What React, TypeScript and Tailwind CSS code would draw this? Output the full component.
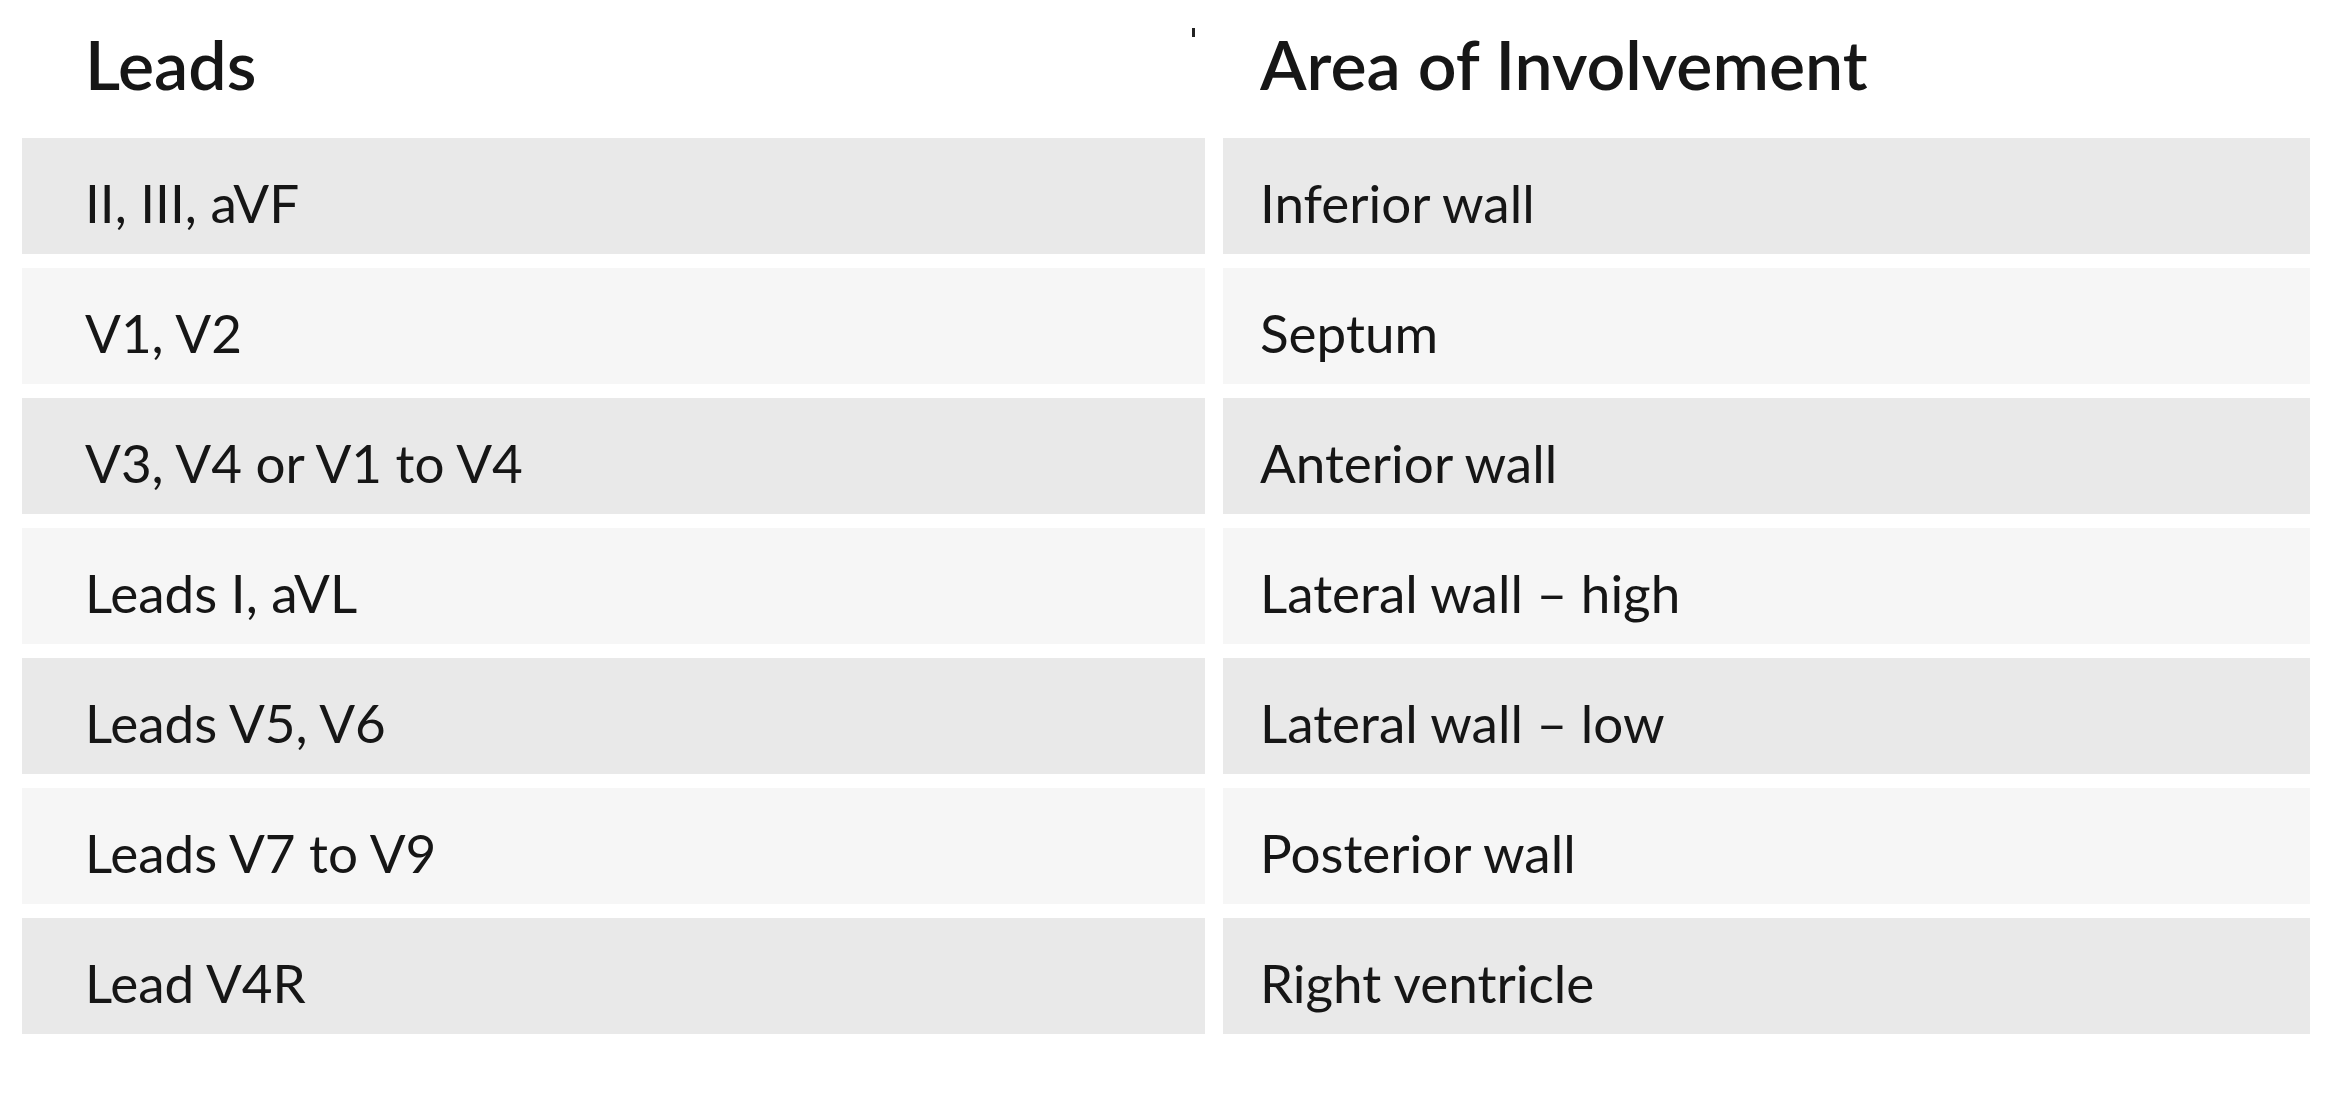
const rows = [
  { leads: 'II, III, aVF', area: 'Inferior wall' },
  { leads: 'V1, V2', area: 'Septum' },
  { leads: 'V3, V4 or V1 to V4', area: 'Anterior wall' },
  { leads: 'Leads I, aVL', area: 'Lateral wall – high' },
  { leads: 'Leads V5, V6', area: 'Lateral wall – low' },
  { leads: 'Leads V7 to V9', area: 'Posterior wall' },
  { leads: 'Lead V4R', area: 'Right ventricle' },
];

export default function App() {
  return (
    <div
      className="relative w-[2340px] h-[1096px] bg-white text-[#161616] overflow-hidden"
      style={{ fontFamily: 'Lato, "Open Sans", sans-serif' }}
    >
      {/* stray scan mark */}
      <div className="absolute left-[1192px] top-[28px] w-[3px] h-[9px] bg-[#222]" />

      <div className="grid grid-cols-[1183px_1087px] gap-x-[18px] gap-y-[14px] px-[22px]">
        <div className="h-[124px] pt-[30px] pl-[63px] text-[68px] leading-none font-semibold">
          Leads
        </div>
        <div className="h-[124px] pt-[30px] pl-[37px] text-[68px] leading-none font-semibold">
          Area of Involvement
        </div>

        {rows.map((row, i) => {
          const bg = i % 2 === 0 ? 'bg-[#e9e9e9]' : 'bg-[#f6f6f6]';
          return [
            <div
              key={`l${i}`}
              className={`${bg} h-[116px] flex items-center pt-[12px] pl-[63px] text-[53px] leading-none`}
            >
              {row.leads}
            </div>,
            <div
              key={`r${i}`}
              className={`${bg} h-[116px] flex items-center pt-[12px] pl-[37px] text-[53px] leading-none`}
            >
              {row.area}
            </div>,
          ];
        })}
      </div>
    </div>
  );
}
